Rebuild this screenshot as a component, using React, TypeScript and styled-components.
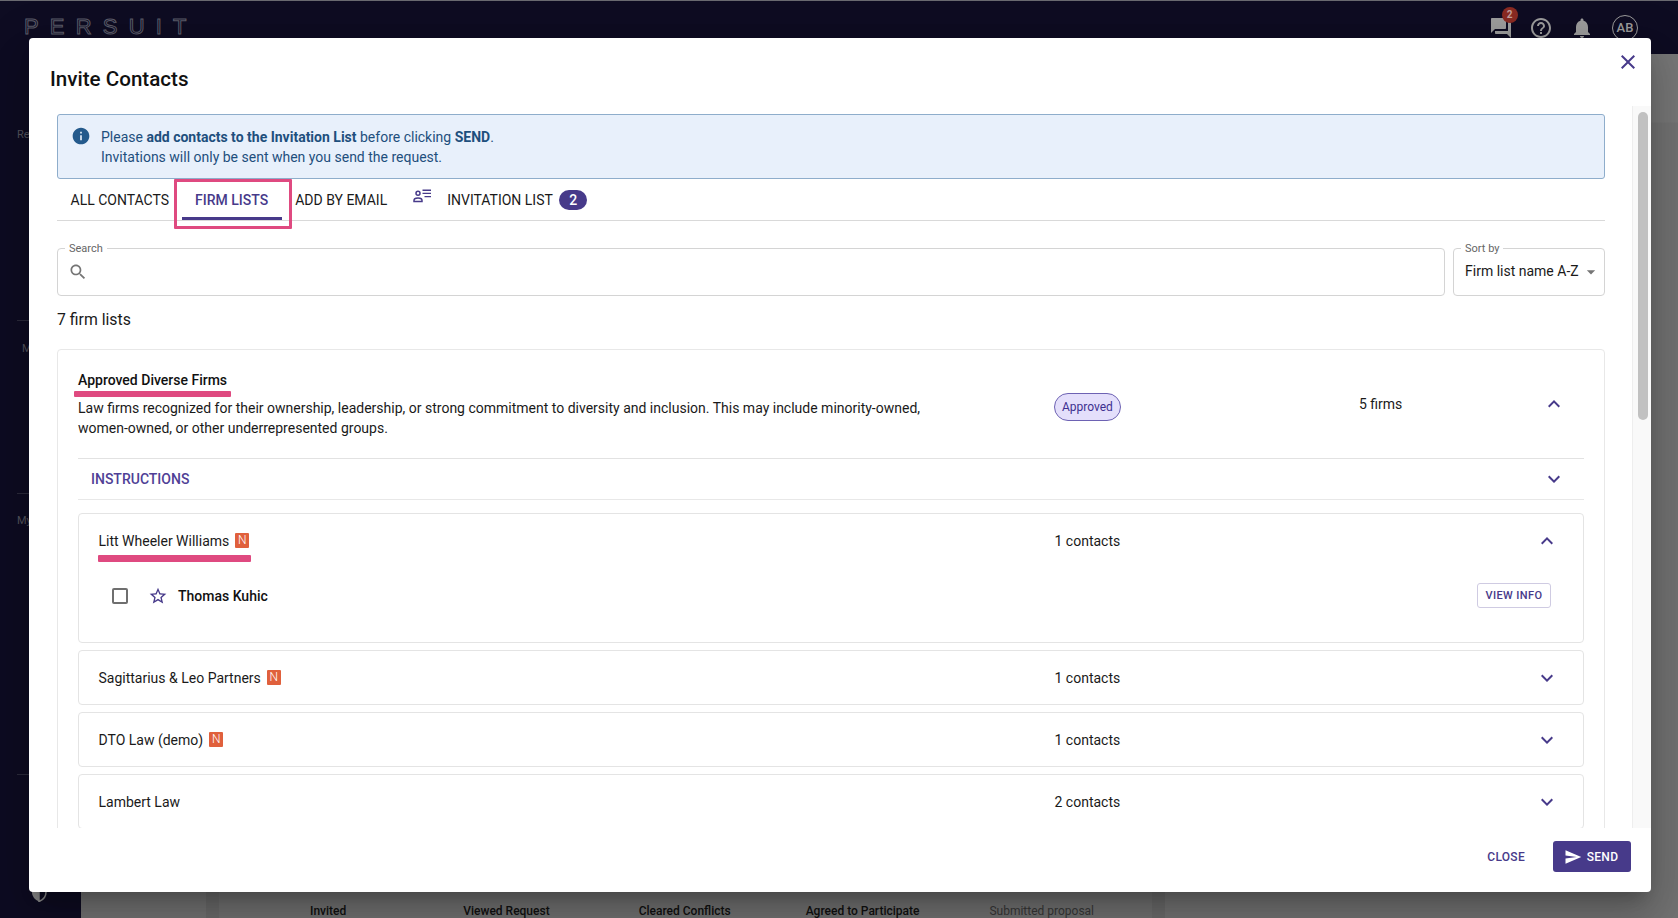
import React from 'react'
import styled, { createGlobalStyle } from 'styled-components'

const purple = '#473a8a'

const GlobalStyle = createGlobalStyle`
  html, body {
    margin: 0;
    padding: 0;
    background: #727272;
  }
  body {
    font-family: Roboto, "Liberation Sans", sans-serif;
    color: #1a1a1a;
    font-size: 14px;
  }
  * {
    box-sizing: border-box;
  }
`

const Page = styled.div`
  position: relative;
  width: 1678px;
  height: 918px;
  overflow: hidden;
  display: flex;
  flex-direction: column;
  background: #727272;
`

/* dimmed app behind the dialog */
const TopBar = styled.header`
  height: 54px;
  flex: none;
  display: flex;
  align-items: center;
  justify-content: space-between;
  padding: 0 40px 0 24px;
  background: #0e0c22;
  border-top: 1px solid #6a6a70;
`

const Logo = styled.div`
  font-family: "Liberation Sans", sans-serif;
  font-size: 22px;
  letter-spacing: 11.2px;
  color: transparent;
  -webkit-text-stroke: 1px #5c5c6a;
  margin-top: -2px;
`

const BarIcons = styled.div`
  display: flex;
  align-items: center;
  gap: 16.5px;
  color: #9c9c9c;
`

const BarIcon = styled.div`
  position: relative;
  display: flex;
  width: 24px;
  height: 24px;
`

const ChatBadge = styled.span`
  position: absolute;
  top: -9px;
  right: -5px;
  width: 16px;
  height: 16px;
  border-radius: 50%;
  background: #8a2a22;
  color: #c4a09c;
  font-size: 10px;
  font-weight: 700;
  line-height: 16px;
  text-align: center;
`

const Avatar = styled.div`
  width: 26px;
  height: 26px;
  margin-left: 2px;
  border: 1.5px solid #9c9c9c;
  border-radius: 50%;
  font-size: 13px;
  font-weight: 500;
  line-height: 23px;
  text-align: center;
`

const Body = styled.div`
  flex: 1;
  display: flex;
  min-height: 0;
`

const Sidebar = styled.aside`
  width: 81px;
  flex: none;
  background: #0e0c22;
`

const SideSection = styled.div<{ $height: number; $top: number; $indent: number }>`
  height: ${p => p.$height}px;
  padding: ${p => p.$top}px 0 0 ${p => p.$indent}px;
  border-bottom: 1px solid #2c2b3c;
  margin-left: 17px;
  color: #55555f;
  font-size: 11px;
  line-height: 16px;
`

const ShieldSlot = styled.div`
  display: flex;
  padding: 107px 0 0 31px;
  color: #8c8c8c;
`

const Main = styled.main`
  flex: 1;
  display: flex;
  align-items: flex-end;
  padding-left: 125px;
  background: linear-gradient(#777 0, #777 68px, #727272 69px);
`

const Strip = styled.div`
  width: 13px;
  height: 60px;
  background: #6a6a6a;
`

const StatusPanel = styled.div`
  width: 933px;
  height: 60px;
  background: #707070;
  display: flex;
  align-items: flex-end;
`

const StatusLabel = styled.span<{ $left: number; $muted?: boolean }>`
  margin-left: ${p => p.$left}px;
  font-size: 12px;
  font-weight: ${p => (p.$muted ? 400 : 500)};
  line-height: 14px;
  color: ${p => (p.$muted ? '#373737' : '#111')};
  white-space: nowrap;
`

/* dialog */
const Dialog = styled.section`
  position: absolute;
  left: 29px;
  top: 38px;
  width: 1622px;
  height: 854px;
  display: flex;
  flex-direction: column;
  background: #fff;
  border-radius: 4px;
  box-shadow: 0 11px 15px -7px rgba(0, 0, 0, 0.2), 0 24px 38px 3px rgba(0, 0, 0, 0.14),
    0 9px 46px 8px rgba(0, 0, 0, 0.12);
`

const DialogHeader = styled.div`
  height: 68px;
  flex: none;
  display: flex;
  justify-content: space-between;
  padding: 27px 11px 0 21px;
`

const DialogTitle = styled.h2`
  margin: 0;
  font-size: 20.6px;
  font-weight: 500;
  line-height: 28px;
  color: #111;
`

const CloseButton = styled.button`
  display: flex;
  width: 24px;
  height: 24px;
  margin-top: -15px;
  padding: 0;
  border: 0;
  background: none;
  fill: ${purple};
`

const ScrollArea = styled.div`
  flex: 1;
  min-height: 0;
  display: flex;
`

const ScrollContent = styled.div`
  width: 1603px;
  flex: none;
  padding: 8px 27px 0 28px;
  overflow: hidden;
`

const ScrollTrack = styled.div`
  width: 19px;
  flex: none;
  padding: 6px 3px 0 5px;
  background: #f9f9f9;
  border-left: 1px solid #eee;
`

const ScrollThumb = styled.div`
  height: 308px;
  border-radius: 6px;
  background: #c1c1c1;
`

const Alert = styled.div`
  height: 65px;
  display: flex;
  gap: 10px;
  padding: 12px 13px;
  background: #e8f0fb;
  border: 1px solid #8eadcb;
  border-radius: 3px;
  color: #1e4f7d;
  font-size: 14px;
  line-height: 20px;
  fill: #245a8c;
`

const AlertIcon = styled.div`
  display: flex;
  width: 20px;
  height: 20px;
  flex: none;
  margin-top: -1px;
`

const Tabs = styled.nav`
  height: 42px;
  display: flex;
  align-items: flex-start;
  padding-left: 0;
  border-bottom: 1px solid #d9d9d9;
`

const Tab = styled.div<{ $active?: boolean }>`
  position: relative;
  height: 41px;
  padding: 11px 13.5px 0;
  margin-left: ${p => (p.$active ? '-1px' : '0')};
  font-size: 14px;
  font-weight: ${p => (p.$active ? 500 : 400)};
  line-height: 20px;
  white-space: nowrap;
  color: ${p => (p.$active ? purple : '#1a1a1a')};
  border-bottom: ${p => (p.$active ? `3px solid ${purple}` : '0')};
`

const Highlight = styled.span`
  position: absolute;
  left: -8px;
  right: -10px;
  top: 0;
  height: 50px;
  border: 3px solid #df4a80;
  border-radius: 1px;
  pointer-events: none;
`

const TabIcon = styled.div`
  display: flex;
  margin: 10px 3px 0 12px;
  color: ${purple};
`

const TabCount = styled.span`
  align-self: flex-start;
  width: 28px;
  height: 20px;
  margin: 11px 0 0 -7px;
  border-radius: 10px;
  background: ${purple};
  color: #fff;
  font-size: 14px;
  font-weight: 500;
  line-height: 20px;
  text-align: center;
`

const FieldRow = styled.div`
  display: flex;
  gap: 8px;
  margin-top: 27px;
`

const Field = styled.div<{ $grow?: boolean }>`
  position: relative;
  height: 48px;
  flex: ${p => (p.$grow ? '1' : '0 0 152px')};
  display: flex;
  align-items: center;
  gap: 3px;
  padding: 0 3px 0 11px;
  border: 1px solid #d4d4d4;
  border-radius: 4px;
  fill: #757575;
`

const FieldLabel = styled.label`
  position: absolute;
  top: -7px;
  left: 7px;
  padding: 0 4px;
  background: #fff;
  color: #666;
  font-size: 11px;
  line-height: 13px;
`

const FieldIcon = styled.div`
  display: flex;
  margin-left: -1px;
`

const SelectValue = styled.span`
  margin-top: -2px;
  font-size: 14px;
  white-space: nowrap;
`

const CountLine = styled.div`
  margin-top: 14px;
  font-size: 15.8px;
  line-height: 20px;
`

const ListCard = styled.article`
  margin-top: 19px;
  padding: 20px 20px 20px 20px;
  border: 1px solid #e8e8e8;
  border-radius: 4px;
`

const ListHead = styled.div`
  display: grid;
  grid-template-columns: 976px 305px 1fr auto;
  align-items: center;
  padding-bottom: 20px;
`

const ListTitle = styled.div`
  position: relative;
  width: fit-content;
  font-weight: 500;
  line-height: 20px;
  color: #111;
`

const Underline = styled.span<{ $left: number; $right: number; $bottom: number; $thick: number }>`
  position: absolute;
  left: ${p => p.$left}px;
  right: ${p => p.$right}px;
  bottom: ${p => p.$bottom}px;
  height: ${p => p.$thick}px;
  border-radius: 1px;
  background: #df4a80;
`

const ListDescription = styled.p`
  width: 860px;
  margin: 8px 0 0;
  line-height: 20px;
  color: #1a1a1a;
`

const Chip = styled.span`
  justify-self: start;
  height: 28px;
  margin-top: 6px;
  padding: 0 7px;
  border: 1px solid #6d62b3;
  border-radius: 14px;
  background: #e4dffb;
  color: #3d3090;
  font-size: 12px;
  line-height: 26px;
`

const ChevronCell = styled.div`
  display: flex;
  padding-right: 18px;
  fill: ${purple};
`

const InstructionsRow = styled.div`
  height: 42px;
  display: flex;
  align-items: center;
  justify-content: space-between;
  padding: 0 18px 0 13px;
  border-top: 1px solid #e2e2e2;
  border-bottom: 1px solid #e8e8e8;
  color: #4f3f96;
  font-weight: 500;
  fill: ${purple};
`

const Firms = styled.div`
  display: flex;
  flex-direction: column;
  gap: 7px;
  margin-top: 13px;
`

const FirmCard = styled.div`
  border: 1px solid #e4e4e4;
  border-radius: 4px;
`

const FirmHead = styled.div`
  height: 53px;
  display: grid;
  grid-template-columns: 956px 1fr auto;
  align-items: center;
  padding-left: 19.5px;
`

const FirmName = styled.div`
  position: relative;
  width: fit-content;
  display: flex;
  align-items: center;
  gap: 6px;
`

const NewBadge = styled.span`
  width: 14px;
  height: 15px;
  border-radius: 1px;
  background: #e0603c;
  color: #fff;
  font-size: 12px;
  font-weight: 300;
  line-height: 15px;
  text-align: center;
`

const FirmChevron = styled.div`
  display: flex;
  padding-right: 24px;
  fill: ${purple};
`

const ContactRow = styled.div`
  display: flex;
  align-items: center;
  margin-top: 16px;
  padding: 0 32px 34px 33px;
`

const Checkbox = styled.span`
  width: 16px;
  height: 16px;
  border: 2px solid #6f6f6f;
  border-radius: 2px;
`

const StarIcon = styled.div`
  display: flex;
  margin-left: 20px;
  fill: ${purple};
`

const ContactName = styled.span`
  margin-left: 10px;
  font-weight: 500;
  color: #111;
`

const ViewInfo = styled.button`
  height: 25px;
  width: 74px;
  margin-left: auto;
  padding: 0;
  border: 1px solid #cfcbe2;
  border-radius: 3px;
  background: #fff;
  color: ${purple};
  font-family: inherit;
  font-size: 11px;
  font-weight: 500;
  letter-spacing: 0.4px;
`

const DialogFooter = styled.div`
  height: 64px;
  flex: none;
  display: flex;
  justify-content: flex-end;
  align-items: center;
  gap: 28px;
  padding: 0 20px 7px 0;
`

const TextButton = styled.button`
  padding: 0;
  border: 0;
  background: none;
  color: ${purple};
  font-family: inherit;
  font-size: 12px;
  font-weight: 500;
  letter-spacing: 0.3px;
`

const SendButton = styled.button`
  width: 78px;
  height: 31px;
  display: flex;
  align-items: center;
  justify-content: center;
  gap: 5px;
  padding: 0 2px 0 0;
  border: 0;
  border-radius: 3px;
  background: ${purple};
  color: #fff;
  fill: #fff;
  font-family: inherit;
  font-size: 12px;
  font-weight: 500;
  letter-spacing: 0.3px;
`

const Icon = ({ d, size = 24, color = 'inherit' }: { d: string; size?: number; color?: string }) => (
  <svg width={size} height={size} viewBox="0 0 24 24" fill={color} aria-hidden="true">
    <path d={d} />
  </svg>
)

const paths = {
  forum: 'M21 6h-2v9H6v2c0 .55.45 1 1 1h11l4 4V7c0-.55-.45-1-1-1zm-4 6V3c0-.55-.45-1-1-1H3c-.55 0-1 .45-1 1v14l4-4h10c.55 0 1-.45 1-1z',
  help: 'M11 18h2v-2h-2v2zm1-16C6.48 2 2 6.48 2 12s4.48 10 10 10 10-4.48 10-10S17.52 2 12 2zm0 18c-4.41 0-8-3.59-8-8s3.59-8 8-8 8 3.59 8 8-3.59 8-8 8zm0-14c-2.21 0-4 1.79-4 4h2c0-1.1.9-2 2-2s2 .9 2 2c0 2-3 1.75-3 5h2c0-2.25 3-2.5 3-5 0-2.21-1.79-4-4-4z',
  bell: 'M12 22c1.1 0 2-.9 2-2h-4c0 1.1.89 2 2 2zm6-6v-5c0-3.07-1.64-5.64-4.5-6.32V4c0-.83-.67-1.5-1.5-1.5s-1.5.67-1.5 1.5v.68C7.63 5.36 6 7.92 6 11v5l-2 2v1h16v-1l-2-2z',
  close: 'M19 6.41L17.59 5 12 10.59 6.41 5 5 6.41 10.59 12 5 17.59 6.41 19 12 13.41 17.59 19 19 17.59 13.41 12z',
  info: 'M12 2C6.48 2 2 6.48 2 12s4.48 10 10 10 10-4.48 10-10S17.52 2 12 2zm1 15h-2v-6h2v6zm0-8h-2V7h2v2z',
  search: 'M15.5 14h-.79l-.28-.27C15.41 12.59 16 11.11 16 9.5 16 5.91 13.09 3 9.5 3S3 5.91 3 9.5 5.91 16 9.5 16c1.61 0 3.09-.59 4.23-1.57l.27.28v.79l5 4.99L20.49 19l-4.99-5zm-6 0C7.01 14 5 11.99 5 9.5S7.01 5 9.5 5 14 7.01 14 9.5 11.99 14 9.5 14z',
  caret: 'M7 10l5 5 5-5z',
  up: 'M12 8l-6 6 1.41 1.41L12 10.83l4.59 4.58L18 14z',
  down: 'M16.59 8.59L12 13.17 7.41 8.59 6 10l6 6 6-6z',
  star: 'M22 9.24l-7.19-.62L12 2 9.19 8.63 2 9.24l5.46 4.73L5.82 21 12 17.27 18.18 21l-1.63-7.03L22 9.24zM12 15.4l-3.76 2.27 1-4.28-3.32-2.88 4.38-.38L12 6.1l1.71 4.04 4.38.38-3.32 2.88 1 4.28L12 15.4z',
  send: 'M2.01 21L23 12 2.01 3 2 10l15 2-15 2z',
}

const InviteeIcon = () => (
  <svg width="18" height="14" viewBox="0 0 18 14" fill="none" stroke="currentColor" aria-hidden="true">
    <circle cx="5" cy="4.2" r="2" strokeWidth="1.5" />
    <path d="M1 12.6v-1.2c0-1.5 2-2.4 4-2.4s4 .9 4 2.4v1.2z" strokeWidth="1.5" />
    <path d="M9.5 1.2H18M9.5 4.4H18M11.5 7.6H18" strokeWidth="1.4" />
  </svg>
)

const ShieldIcon = () => (
  <svg width="16" height="20" viewBox="0 0 16 20" aria-hidden="true">
    <path d="M8 1 1 4v6c0 4.500 3 8 7 9.500z" fill="currentColor" />
    <path d="M8 1l7 3v6c0 4.500-3 8-7 9.500z" fill="none" stroke="currentColor" strokeWidth="1.500" />
  </svg>
)

const firms = [
  { name: 'Sagittarius & Leo Partners', contacts: '1 contacts', isNew: true },
  { name: 'DTO Law (demo)', contacts: '1 contacts', isNew: true },
  { name: 'Lambert Law', contacts: '2 contacts', isNew: false },
]

export default function App() {
  return (
    <Page>
      <GlobalStyle />
      <TopBar>
        <Logo>PERSUIT</Logo>
        <BarIcons>
          <BarIcon>
            <Icon d={paths.forum} color="currentColor" />
            <ChatBadge>2</ChatBadge>
          </BarIcon>
          <BarIcon><Icon d={paths.help} color="currentColor" /></BarIcon>
          <BarIcon><Icon d={paths.bell} color="currentColor" /></BarIcon>
          <Avatar>AB</Avatar>
        </BarIcons>
      </TopBar>

      <Body>
        <Sidebar>
          <SideSection $height={267} $top={73} $indent={0}>Re</SideSection>
          <SideSection $height={173} $top={20} $indent={5}>M</SideSection>
          <SideSection $height={281} $top={19} $indent={0}>My</SideSection>
          <ShieldSlot>
            <ShieldIcon />
          </ShieldSlot>
        </Sidebar>
        <Main>
          <Strip />
          <StatusPanel>
            <StatusLabel $left={91}>Invited</StatusLabel>
            <StatusLabel $left={117}>Viewed Request</StatusLabel>
            <StatusLabel $left={89}>Cleared Conflicts</StatusLabel>
            <StatusLabel $left={75}>Agreed to Participate</StatusLabel>
            <StatusLabel $left={70} $muted>Submitted proposal</StatusLabel>
          </StatusPanel>
          <Strip />
        </Main>
      </Body>

      <Dialog role="dialog" aria-label="Invite Contacts">
        <DialogHeader>
          <DialogTitle>Invite Contacts</DialogTitle>
          <CloseButton aria-label="Close"><Icon d={paths.close} /></CloseButton>
        </DialogHeader>

        <ScrollArea>
          <ScrollContent>
            <Alert>
              <AlertIcon><Icon d={paths.info} size={20} /></AlertIcon>
              <div>
                Please <b>add contacts to the Invitation List</b> before clicking <b>SEND</b>.
                <br />
                Invitations will only be sent when you send the request.
              </div>
            </Alert>

            <Tabs>
              <Tab>ALL CONTACTS</Tab>
              <Tab $active>
                FIRM LISTS
                <Highlight />
              </Tab>
              <Tab>ADD BY EMAIL</Tab>
              <TabIcon><InviteeIcon /></TabIcon>
              <Tab>INVITATION LIST</Tab>
              <TabCount>2</TabCount>
            </Tabs>

            <FieldRow>
              <Field $grow>
                <FieldLabel>Search</FieldLabel>
                <FieldIcon><Icon d={paths.search} size={20} /></FieldIcon>
              </Field>
              <Field>
                <FieldLabel>Sort by</FieldLabel>
                <SelectValue>Firm list name A-Z</SelectValue>
                <FieldIcon><Icon d={paths.caret} size={20} /></FieldIcon>
              </Field>
            </FieldRow>

            <CountLine>7 firm lists</CountLine>

            <ListCard>
              <ListHead>
                <div>
                  <ListTitle>
                    Approved Diverse Firms
                    <Underline $left={-4} $right={-4} $bottom={-7} $thick={6} />
                  </ListTitle>
                  <ListDescription>
                    Law firms recognized for their ownership, leadership, or strong commitment to diversity and
                    inclusion. This may include minority-owned, women-owned, or other underrepresented groups.
                  </ListDescription>
                </div>
                <Chip>Approved</Chip>
                <span>5 firms</span>
                <ChevronCell><Icon d={paths.up} /></ChevronCell>
              </ListHead>

              <InstructionsRow>
                INSTRUCTIONS
                <Icon d={paths.down} />
              </InstructionsRow>

              <Firms>
                <FirmCard>
                  <FirmHead>
                    <FirmName>
                      Litt Wheeler Williams
                      <NewBadge>N</NewBadge>
                      <Underline $left={-1} $right={-2} $bottom={-13} $thick={7} />
                    </FirmName>
                    <span>1 contacts</span>
                    <FirmChevron><Icon d={paths.up} /></FirmChevron>
                  </FirmHead>
                  <ContactRow>
                    <Checkbox />
                    <StarIcon><Icon d={paths.star} size={20} /></StarIcon>
                    <ContactName>Thomas Kuhic</ContactName>
                    <ViewInfo>VIEW INFO</ViewInfo>
                  </ContactRow>
                </FirmCard>
                {firms.map(firm => (
                  <FirmCard key={firm.name}>
                    <FirmHead>
                      <FirmName>
                        {firm.name}
                        {firm.isNew && <NewBadge>N</NewBadge>}
                      </FirmName>
                      <span>{firm.contacts}</span>
                      <FirmChevron><Icon d={paths.down} /></FirmChevron>
                    </FirmHead>
                  </FirmCard>
                ))}
              </Firms>
            </ListCard>
          </ScrollContent>
          <ScrollTrack>
            <ScrollThumb />
          </ScrollTrack>
        </ScrollArea>

        <DialogFooter>
          <TextButton>CLOSE</TextButton>
          <SendButton><Icon d={paths.send} size={18} />SEND</SendButton>
        </DialogFooter>
      </Dialog>
    </Page>
  )
}
